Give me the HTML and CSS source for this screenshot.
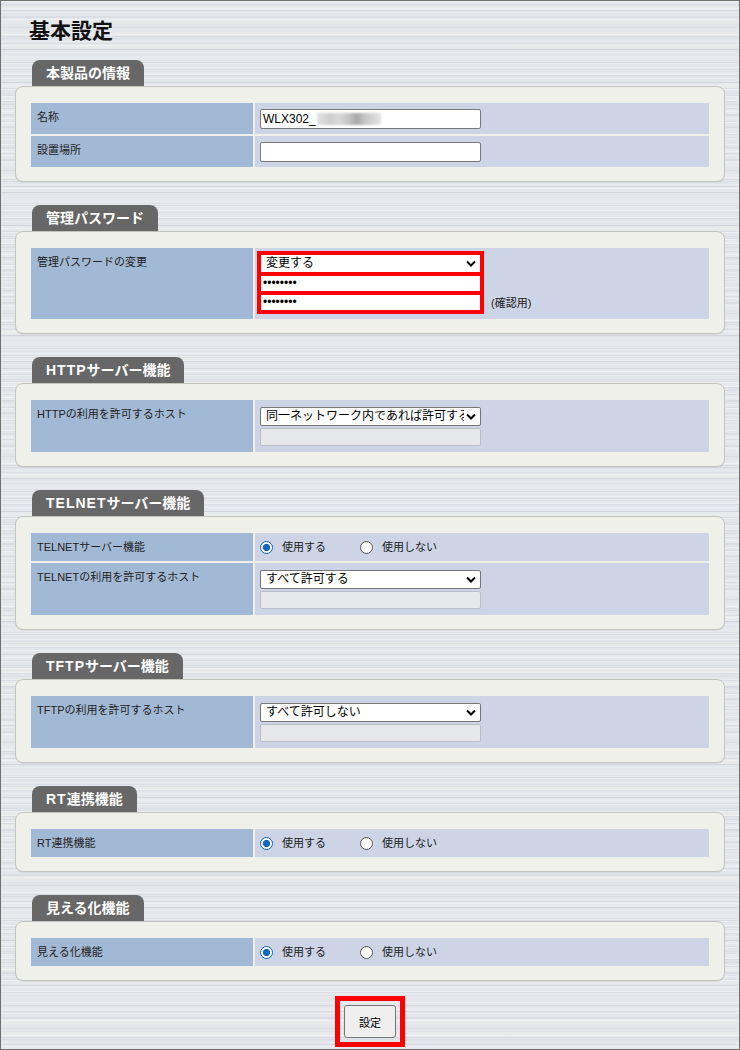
FILE: index.html
```html
<!DOCTYPE html>
<html lang="ja">
<head>
<meta charset="utf-8">
<title>基本設定</title>
<link rel="stylesheet" href="styles.css">
</head>
<body>
<div class="page">
  <h1 class="title">基本設定</h1>

  <section class="section">
    <div class="tab">本製品の情報</div>
    <div class="panel">
      <div class="grid">
        <div class="label">名称</div>
        <div class="value v-input">
          <div class="textbox"><span>WLX302_</span><span class="blur"></span></div>
        </div>
        <div class="label">設置場所</div>
        <div class="value v-input">
          <div class="textbox"></div>
        </div>
      </div>
    </div>
  </section>

  <section class="section">
    <div class="tab">管理パスワード</div>
    <div class="panel">
      <div class="grid">
        <div class="label">管理パスワードの変更</div>
        <div class="value v-pw">
          <div class="redbox">
            <div class="select in-red"><span class="txt">変更する</span><svg class="chev" viewBox="0 0 10 7"><path d="M1 1.5 L5 5.5 L9 1.5" fill="none" stroke="#000" stroke-width="2"/></svg></div>
            <div class="pwfield">••••••••</div>
            <div class="pwfield">••••••••</div>
          </div>
          <span class="note">(確認用)</span>
        </div>
      </div>
    </div>
  </section>

  <section class="section">
    <div class="tab"><span class="lat">HTTP</span>サーバー機能</div>
    <div class="panel">
      <div class="grid">
        <div class="label">HTTPの利用を許可するホスト</div>
        <div class="value v-sel">
          <div class="select"><span class="txt">同一ネットワーク内であれば許可する</span><svg class="chev" viewBox="0 0 10 7"><path d="M1 1.5 L5 5.5 L9 1.5" fill="none" stroke="#000" stroke-width="2"/></svg></div>
          <div class="disabled"></div>
        </div>
      </div>
    </div>
  </section>

  <section class="section">
    <div class="tab"><span class="lat">TELNET</span>サーバー機能</div>
    <div class="panel">
      <div class="grid">
        <div class="label">TELNETサーバー機能</div>
        <div class="value v-radio">
          <label class="opt"><input type="radio" name="telnet" checked><span>使用する</span></label>
          <label class="opt"><input type="radio" name="telnet"><span>使用しない</span></label>
        </div>
        <div class="label">TELNETの利用を許可するホスト</div>
        <div class="value v-sel">
          <div class="select"><span class="txt">すべて許可する</span><svg class="chev" viewBox="0 0 10 7"><path d="M1 1.5 L5 5.5 L9 1.5" fill="none" stroke="#000" stroke-width="2"/></svg></div>
          <div class="disabled"></div>
        </div>
      </div>
    </div>
  </section>

  <section class="section">
    <div class="tab"><span class="lat">TFTP</span>サーバー機能</div>
    <div class="panel">
      <div class="grid">
        <div class="label">TFTPの利用を許可するホスト</div>
        <div class="value v-sel">
          <div class="select"><span class="txt">すべて許可しない</span><svg class="chev" viewBox="0 0 10 7"><path d="M1 1.5 L5 5.5 L9 1.5" fill="none" stroke="#000" stroke-width="2"/></svg></div>
          <div class="disabled"></div>
        </div>
      </div>
    </div>
  </section>

  <section class="section">
    <div class="tab"><span class="lat">RT</span>連携機能</div>
    <div class="panel">
      <div class="grid">
        <div class="label">RT連携機能</div>
        <div class="value v-radio">
          <label class="opt"><input type="radio" name="rt" checked><span>使用する</span></label>
          <label class="opt"><input type="radio" name="rt"><span>使用しない</span></label>
        </div>
      </div>
    </div>
  </section>

  <section class="section">
    <div class="tab">見える化機能</div>
    <div class="panel">
      <div class="grid">
        <div class="label">見える化機能</div>
        <div class="value v-radio">
          <label class="opt"><input type="radio" name="vis" checked><span>使用する</span></label>
          <label class="opt"><input type="radio" name="vis"><span>使用しない</span></label>
        </div>
      </div>
    </div>
  </section>

  <div class="submit">
    <div class="highlight"><button class="btn" type="button">設定</button></div>
  </div>
</div>
</body>
</html>
```

FILE: styles.css
```css
* { box-sizing: border-box; }
html, body { margin: 0; padding: 0; }
body {
  font-family: "Liberation Sans", "Noto Sans CJK JP", sans-serif;
  color: #222;
}
.page {
  width: 740px;
  height: 1050px;
  border: 1px solid #6f6f6f;
  padding: 14px 14px 0;
  overflow: hidden;
  background-color: #e2e5ea;
  background-image:
    repeating-linear-gradient(180deg, rgba(255,255,255,0.35) 0 1px, transparent 1px 4px, rgba(0,0,0,0.035) 4px 5px, transparent 5px 7px, rgba(255,255,255,0.25) 7px 8px, transparent 8px 11px),
    repeating-linear-gradient(180deg, #e3e6eb 0 3px, #dadde3 3px 4px, #e7e9ed 4px 9px, #d9dce2 9px 10px, #e2e5ea 10px 13px);
}
.title {
  margin: 0 0 17px;
  padding-left: 14px;
  font-family: "Noto Sans CJK JP", sans-serif;
  font-size: 21px;
  line-height: 28px;
  font-weight: 700;
  color: #111;
}
.section + .section { margin-top: 23px; }
.tab {
  width: fit-content;
  margin-left: 17px;
  height: 26px;
  padding: 0 14px;
  background: #676767;
  color: #fff;
  font-family: "Liberation Sans", "Noto Sans CJK JP", sans-serif;
  font-size: 14px;
  font-weight: 700;
  line-height: 27px;
  border-radius: 8px 8px 0 0;
  white-space: nowrap;
}
.tab .lat { letter-spacing: 1px; }
.panel {
  background: #f0f0eb;
  border: 1px solid #c4c4bf;
  border-radius: 8px;
  padding: 16px 15px 14px;
  box-shadow: 0 1px 1px rgba(0,0,0,0.06);
}
.grid {
  display: grid;
  grid-template-columns: 222px 1fr;
  gap: 2px;
}
.label {
  background: #a2b9d5;
  font-size: 11px;
  line-height: 16px;
  padding: 6px 6px 0;
  color: #222;
  white-space: nowrap;
}
.value {
  background: #ccd4e6;
  padding-left: 5px;
  font-size: 11px;
  color: #222;
}
.v-input { height: 31px; display: flex; align-items: center; }
.v-radio { height: 28px; display: flex; align-items: center; }
.v-sel {
  height: 52px;
  padding-top: 7px;
  display: flex;
  flex-direction: column;
  gap: 2px;
}
.v-pw {
  height: 71px;
  padding: 3px 0 0 2px;
  display: flex;
  align-items: flex-start;
}
.textbox {
  width: 221px;
  height: 20px;
  border: 1px solid #7a7a7a;
  border-radius: 2px;
  background: #fff;
  font-size: 12px;
  line-height: 18px;
  padding-left: 2px;
  display: flex;
  align-items: center;
  color: #000;
}
.blur {
  display: inline-block;
  width: 64px;
  height: 12px;
  margin-left: 1px;
  background: linear-gradient(90deg, #e2e2e2 0%, #cfcfcf 20%, #d8d8d8 35%, #c2c2c2 50%, #a9a9a9 62%, #c6c6c6 75%, #e4e4e4 100%);
  filter: blur(1px);
}
.select {
  width: 221px;
  height: 19px;
  flex: none;
  border: 1px solid #767676;
  border-radius: 2px;
  background: #fff;
  display: flex;
  align-items: center;
  padding: 0 4px 0 5px;
  font-size: 12px;
  color: #000;
}
.select .txt {
  flex: 1;
  overflow: hidden;
  white-space: nowrap;
  line-height: 17px;
}
.chev { width: 10px; height: 7px; flex: none; margin-left: 2px; }
.disabled {
  width: 221px;
  height: 18px;
  flex: none;
  border: 1px solid #b9bdc5;
  border-radius: 2px;
  background: #e6e8ec;
}
.redbox {
  width: 227px;
  background: #f00;
  padding: 4px;
  display: flex;
  flex-direction: column;
  gap: 4px;
}
.select.in-red {
  width: auto;
  height: 17px;
  border: none;
  border-radius: 0;
}
.pwfield {
  height: 15px;
  background: #fff;
  font-size: 12px;
  line-height: 15px;
  padding-left: 2px;
  color: #000;
}
.note {
  align-self: flex-end;
  margin-left: 7px;
  margin-bottom: 8px;
  font-size: 11px;
  line-height: 16px;
}
.opt {
  display: flex;
  align-items: center;
  width: 100px;
}
.opt input {
  appearance: none;
  -webkit-appearance: none;
  margin: 0;
  width: 13px;
  height: 13px;
  flex: none;
  border: 1px solid #555;
  border-radius: 50%;
  background: #fff;
}
.opt input:checked {
  border: 1.5px solid #1066c4;
  background: radial-gradient(circle at center, #1066c4 0 3.3px, #fff 3.9px);
}
.opt span { margin-left: 9px; font-size: 11px; line-height: 16px; }
.submit {
  margin-top: 15px;
  display: flex;
  justify-content: center;
}
.highlight {
  border: 5px solid #f00;
  padding: 4px;
}
.btn {
  display: block;
  width: 52px;
  height: 33px;
  border: 1px solid #767676;
  border-radius: 3px;
  background: #efefef;
  font-family: "Noto Sans CJK JP", sans-serif;
  font-size: 11px;
  color: #000;
  padding: 0;
}
```
